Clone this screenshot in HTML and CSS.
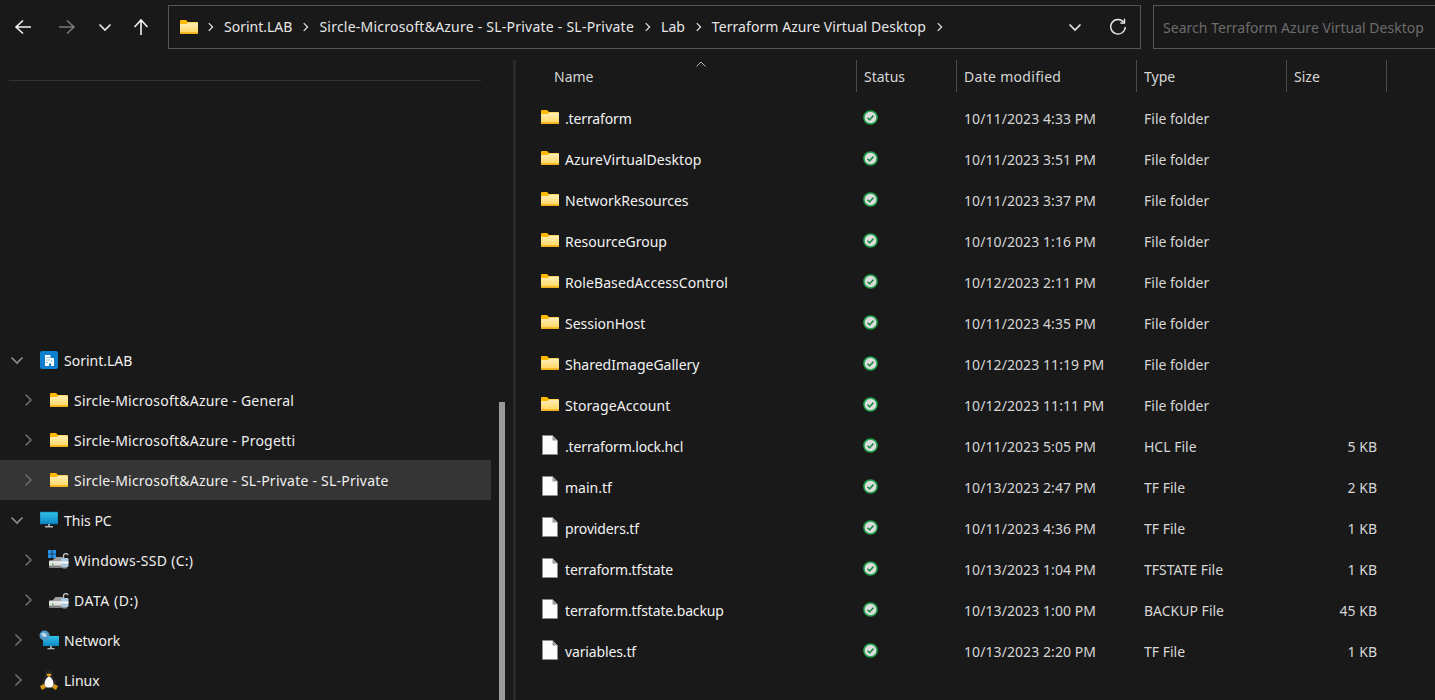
FILE: index.html
```html
<!DOCTYPE html>
<html lang="en">
<head>
<meta charset="utf-8">
<title>Terraform Azure Virtual Desktop</title>
<link rel="stylesheet" href="styles.css">
</head>
<body>
<svg class="defs" width="0" height="0" aria-hidden="true">
  <defs>
    <linearGradient id="fg" x1="0" y1="0" x2="0" y2="1"><stop offset="0" stop-color="#ffefb8"/><stop offset="1" stop-color="#ffd966"/></linearGradient>
    <linearGradient id="sc" x1="0" y1="0" x2="0" y2="1"><stop offset="0" stop-color="#2fc3e6"/><stop offset="1" stop-color="#0f86c4"/></linearGradient>
    <symbol id="folder" viewBox="0 0 18 14">
      <path d="M0 1a1 1 0 0 1 1-1h5l2 2h9a1 1 0 0 1 1 1v10a1 1 0 0 1-1 1H1a1 1 0 0 1-1-1z" fill="#ffb900"/>
      <path d="M0 4h6.500L8.500 2.500H17a1 1 0 0 1 1 1V12.500H0z" fill="url(#fg)"/>
      <path d="M0 12.500h18v.5a1 1 0 0 1-1 1H1a1 1 0 0 1-1-1z" fill="#f2b01e"/>
    </symbol>
    <symbol id="file" viewBox="0 0 16 20">
      <path d="M.5.500H10.500L15.500 5.500V19.500H.5z" fill="#fcfcfc" stroke="#8a8a8a"/>
      <path d="M10.500.500V5.500H15.500z" fill="#9a9a9a"/>
    </symbol>
    <symbol id="ok" viewBox="0 0 16 16">
      <circle cx="8" cy="8" r="7" fill="#dcdcdc" stroke="#1fa34a" stroke-width="1.600"/>
      <path d="M4.800 8.300l2.200 2.100 4.200-4.400" fill="none" stroke="#1f8a44" stroke-width="1.700"/>
    </symbol>
    <symbol id="chev-r" viewBox="0 0 10 14"><path d="M2.500 1.500L8 7l-5.500 5.500" fill="none" stroke="currentColor" stroke-width="1.700"/></symbol>
    <symbol id="chev-d" viewBox="0 0 14 10"><path d="M1.500 2.500L7 8l5.500-5.500" fill="none" stroke="currentColor" stroke-width="1.700"/></symbol>
    <symbol id="drive" viewBox="0 0 20 16">
      <path d="M3.500 7.500L6.500 4h7v3.500z" fill="#a0a0a0"/>
      <rect x="0" y="7.500" width="15" height="7" rx="1" fill="#e2e2e2"/>
      <rect x="0" y="12.500" width="15" height="2" fill="#808080"/>
      <rect x="3" y="10.500" width="1.500" height="1.500" fill="#2fb344"/>
      <path d="M14.500 5V2.800a2.300 2.300 0 0 1 4.500-.6" fill="none" stroke="#c0c0c0" stroke-width="1.400"/>
      <rect x="12" y="5" width="7.500" height="9" rx="1" fill="#a9c9e0"/>
      <rect x="12" y="8.500" width="7.500" height="2" fill="#f0f6fa"/>
      <rect x="13.500" y="14" width="4.500" height="1.500" fill="#909090"/>
    </symbol>
    <symbol id="winlogo" viewBox="0 0 7 7">
      <path d="M0 0h3.200v3.200H0zM3.800 0H7v3.200H3.800zM0 3.800h3.200V7H0zM3.800 3.800H7V7H3.800z" fill="#2a93e6"/>
    </symbol>
  </defs>
</svg>

<header class="toolbar">
  <div class="nav-buttons">
    <svg class="tb-ico back" viewBox="0 0 18 18"><path d="M17 9H2M9 2.500L2 9l7 6.500" fill="none" stroke="currentColor" stroke-width="1.600"/></svg>
    <svg class="tb-ico forward" viewBox="0 0 18 18"><path d="M1 9H16M9 2.500L16 9l-7 6.500" fill="none" stroke="currentColor" stroke-width="1.600"/></svg>
    <svg class="tb-chev" viewBox="0 0 14 10"><use href="#chev-d"/></svg>
    <svg class="tb-ico up" viewBox="0 0 18 18"><path d="M9 17V2M2.500 9L9 2l6.500 7" fill="none" stroke="currentColor" stroke-width="1.600"/></svg>
  </div>
  <div class="address">
    <svg class="addr-folder"><use href="#folder"/></svg>
    <svg class="crumb-sep"><use href="#chev-r"/></svg><span>Sorint.LAB</span>
    <svg class="crumb-sep"><use href="#chev-r"/></svg><span class="sircle">Sircle-Microsoft&amp;Azure - SL-Private - SL-Private</span>
    <svg class="crumb-sep"><use href="#chev-r"/></svg><span>Lab</span>
    <svg class="crumb-sep"><use href="#chev-r"/></svg><span class="crumb-long">Terraform Azure Virtual Desktop</span>
    <svg class="crumb-sep"><use href="#chev-r"/></svg>
    <div class="addr-tools">
      <svg class="addr-chev" viewBox="0 0 14 10"><use href="#chev-d"/></svg>
      <svg class="refresh" viewBox="0 0 18 18"><path d="M14.800 4.300A7.300 7.300 0 1 0 16.300 9" fill="none" stroke="currentColor" stroke-width="1.400"/><path d="M15.500 .8v4.200h-4.200" fill="none" stroke="currentColor" stroke-width="1.400"/></svg>
    </div>
  </div>
  <div class="search">Search Terraform Azure Virtual Desktop</div>
</header>

<main class="body">
  <nav class="sidebar">
    <div class="side-rule"></div>
    <div class="tree">
      <div class="tree-row lvl1">
        <svg class="exp-d" viewBox="0 0 14 10"><use href="#chev-d"/></svg>
        <svg class="t-ico" viewBox="0 0 18 18"><rect width="18" height="18" rx="2" fill="#0f7fd0"/><path d="M5 15V4h5.500v3H14v8h-3v-2.500H9V15z" fill="#fff"/><path d="M6.500 6h1v1h-1zM8.500 6h1v1h-1zM6.500 8.500h1v1h-1zM8.500 8.500h1v1h-1zM11 9.500h1v1h-1zM6.500 11h1v1h-1z" fill="#0f7fd0"/></svg>
        <span class="label">Sorint.LAB</span>
      </div>
      <div class="tree-row lvl2">
        <svg class="exp-r" viewBox="0 0 10 14"><use href="#chev-r"/></svg>
        <svg class="t-folder"><use href="#folder"/></svg>
        <span class="label sircle">Sircle-Microsoft&amp;Azure - General</span>
      </div>
      <div class="tree-row lvl2">
        <svg class="exp-r" viewBox="0 0 10 14"><use href="#chev-r"/></svg>
        <svg class="t-folder"><use href="#folder"/></svg>
        <span class="label sircle">Sircle-Microsoft&amp;Azure - Progetti</span>
      </div>
      <div class="tree-row lvl2 selected">
        <svg class="exp-r" viewBox="0 0 10 14"><use href="#chev-r"/></svg>
        <svg class="t-folder"><use href="#folder"/></svg>
        <span class="label sircle">Sircle-Microsoft&amp;Azure - SL-Private - SL-Private</span>
      </div>
      <div class="tree-row lvl1">
        <svg class="exp-d" viewBox="0 0 14 10"><use href="#chev-d"/></svg>
        <svg class="t-ico" viewBox="0 0 18 18"><rect y="1" width="18" height="12" rx=".5" fill="url(#sc)"/><rect y="1" width="18" height="12" fill="none" stroke="#0a6d9e" stroke-width=".6"/><rect x="8" y="13" width="2" height="2" fill="#8aa"/><rect x="5" y="15" width="8" height="1.500" fill="#b0b8bc"/></svg>
        <span class="label">This PC</span>
      </div>
      <div class="tree-row lvl2">
        <svg class="exp-r" viewBox="0 0 10 14"><use href="#chev-r"/></svg>
        <span class="drive-wrap">
          <svg class="t-drive"><use href="#drive"/></svg>
          <svg class="t-win"><use href="#winlogo"/></svg>
        </span>
        <span class="label drive-label">Windows-SSD (C:)</span>
      </div>
      <div class="tree-row lvl2">
        <svg class="exp-r" viewBox="0 0 10 14"><use href="#chev-r"/></svg>
        <span class="drive-wrap"><svg class="t-drive"><use href="#drive"/></svg></span>
        <span class="label data-label">DATA (D:)</span>
      </div>
      <div class="tree-row lvl1">
        <svg class="exp-r" viewBox="0 0 10 14"><use href="#chev-r"/></svg>
        <svg class="t-ico wide" viewBox="0 0 20 20"><rect x="4" y="6" width="16" height="10" fill="url(#sc)"/><rect x="11" y="16" width="2" height="2" fill="#8aa"/><rect x="8.500" y="18" width="7" height="1.300" fill="#b0b8bc"/><circle cx="5.500" cy="5.500" r="5" fill="#4f97c4"/><path d="M2 4c2-2 4-1 5 0s1 3-1 3-3-1-4-3z" fill="#b8d8ec"/></svg>
        <span class="label">Network</span>
      </div>
      <div class="tree-row lvl1">
        <svg class="exp-r" viewBox="0 0 10 14"><use href="#chev-r"/></svg>
        <svg class="t-ico wide" viewBox="0 0 20 20"><path d="M10 0c2.800 0 3.700 2.300 3.700 4.500 0 2.200 2.800 4.500 3.300 8.500.2 2-1 3.500-7 3.500S2.800 15 3 13c.5-4 3.300-6.300 3.300-8.500C6.300 2.300 7.200 0 10 0z" fill="#262626"/><path d="M10 6.500c1.700 0 4.500 4 4.500 7.200S12.800 17.500 10 17.500s-4.500-.6-4.500-3.800S8.300 6.500 10 6.500z" fill="#fff"/><path d="M8.300 3.800h3.400l.9 1.300L10 6.900 7.400 5.100z" fill="#e0a020"/><path d="M1 16l4-2 1.800 3.800L3 20zM19 16l-4-2-1.800 3.800L17 20z" fill="#d99a17"/></svg>
        <span class="label">Linux</span>
      </div>
    </div>
    <div class="nav-scroll"></div>
  </nav>
  <div class="divider"></div>
  <section class="list">
    <div class="row head">
      <div class="cell name-h">Name<svg class="sort" viewBox="0 0 10 6"><path d="M.5 5.500L5 1l4.500 4.500" fill="none" stroke="currentColor"/></svg></div>
      <div class="cell">Status</div>
      <div class="cell date-h">Date modified</div>
      <div class="cell">Type</div>
      <div class="cell">Size</div>
    </div>
    <div class="rows">
      <div class="row item"><div class="name tight"><svg class="i-folder"><use href="#folder"/></svg>.terraform</div><div class="status"><svg class="i-ok"><use href="#ok"/></svg></div><div class="cell-d date">10/11/2023 4:33 PM</div><div class="cell-d">File folder</div><div class="size"></div></div>
      <div class="row item"><div class="name loose"><svg class="i-folder"><use href="#folder"/></svg>AzureVirtualDesktop</div><div class="status"><svg class="i-ok"><use href="#ok"/></svg></div><div class="cell-d date">10/11/2023 3:51 PM</div><div class="cell-d">File folder</div><div class="size"></div></div>
      <div class="row item"><div class="name"><svg class="i-folder"><use href="#folder"/></svg>NetworkResources</div><div class="status"><svg class="i-ok"><use href="#ok"/></svg></div><div class="cell-d date">10/11/2023 3:37 PM</div><div class="cell-d">File folder</div><div class="size"></div></div>
      <div class="row item"><div class="name"><svg class="i-folder"><use href="#folder"/></svg>ResourceGroup</div><div class="status"><svg class="i-ok"><use href="#ok"/></svg></div><div class="cell-d date">10/10/2023 1:16 PM</div><div class="cell-d">File folder</div><div class="size"></div></div>
      <div class="row item"><div class="name loose"><svg class="i-folder"><use href="#folder"/></svg>RoleBasedAccessControl</div><div class="status"><svg class="i-ok"><use href="#ok"/></svg></div><div class="cell-d date">10/12/2023 2:11 PM</div><div class="cell-d">File folder</div><div class="size"></div></div>
      <div class="row item"><div class="name"><svg class="i-folder"><use href="#folder"/></svg>SessionHost</div><div class="status"><svg class="i-ok"><use href="#ok"/></svg></div><div class="cell-d date">10/11/2023 4:35 PM</div><div class="cell-d">File folder</div><div class="size"></div></div>
      <div class="row item"><div class="name"><svg class="i-folder"><use href="#folder"/></svg>SharedImageGallery</div><div class="status"><svg class="i-ok"><use href="#ok"/></svg></div><div class="cell-d date">10/12/2023 11:19 PM</div><div class="cell-d">File folder</div><div class="size"></div></div>
      <div class="row item"><div class="name loose"><svg class="i-folder"><use href="#folder"/></svg>StorageAccount</div><div class="status"><svg class="i-ok"><use href="#ok"/></svg></div><div class="cell-d date">10/12/2023 11:11 PM</div><div class="cell-d">File folder</div><div class="size"></div></div>
      <div class="row item"><div class="name tight"><svg class="i-file"><use href="#file"/></svg>.terraform.lock.hcl</div><div class="status"><svg class="i-ok"><use href="#ok"/></svg></div><div class="cell-d date">10/11/2023 5:05 PM</div><div class="cell-d">HCL File</div><div class="size">5 KB</div></div>
      <div class="row item"><div class="name"><svg class="i-file"><use href="#file"/></svg>main.tf</div><div class="status"><svg class="i-ok"><use href="#ok"/></svg></div><div class="cell-d date">10/13/2023 2:47 PM</div><div class="cell-d">TF File</div><div class="size">2 KB</div></div>
      <div class="row item"><div class="name tight"><svg class="i-file"><use href="#file"/></svg>providers.tf</div><div class="status"><svg class="i-ok"><use href="#ok"/></svg></div><div class="cell-d date">10/11/2023 4:36 PM</div><div class="cell-d">TF File</div><div class="size">1 KB</div></div>
      <div class="row item"><div class="name tight"><svg class="i-file"><use href="#file"/></svg>terraform.tfstate</div><div class="status"><svg class="i-ok"><use href="#ok"/></svg></div><div class="cell-d date">10/13/2023 1:04 PM</div><div class="cell-d">TFSTATE File</div><div class="size">1 KB</div></div>
      <div class="row item"><div class="name tight"><svg class="i-file"><use href="#file"/></svg>terraform.tfstate.backup</div><div class="status"><svg class="i-ok"><use href="#ok"/></svg></div><div class="cell-d date">10/13/2023 1:00 PM</div><div class="cell-d">BACKUP File</div><div class="size">45 KB</div></div>
      <div class="row item"><div class="name tight"><svg class="i-file"><use href="#file"/></svg>variables.tf</div><div class="status"><svg class="i-ok"><use href="#ok"/></svg></div><div class="cell-d date">10/13/2023 2:20 PM</div><div class="cell-d">TF File</div><div class="size">1 KB</div></div>
    </div>
  </section>
</main>
</body>
</html>
```
FILE: styles.css
```css
* { box-sizing: border-box; }
html, body { margin: 0; height: 100%; overflow: hidden; }
body {
  background: #191919;
  color: #f2f2f2;
  font-family: "Noto Sans", "Open Sans", "Liberation Sans", sans-serif;
  font-size: 14px;
  line-height: 20px;
  display: flex;
  flex-direction: column;
  width: 1435px;
  height: 700px;
}
.defs { position: absolute; width: 0; height: 0; overflow: hidden; }
svg { display: block; flex: none; }
.sircle { letter-spacing: .23px; }
.drive-label { letter-spacing: .3px; }
.data-label { letter-spacing: .55px; }
.tight { letter-spacing: -.14px; }
.loose { letter-spacing: .08px; }

.toolbar { height: 60px; flex: none; display: flex; align-items: flex-start; padding-top: 5px; }
.nav-buttons { width: 168px; height: 44px; display: flex; align-items: center; flex: none; }
.tb-ico { width: 18px; height: 18px; color: #f2f2f2; }
.back { margin-left: 14px; }
.forward { margin-left: 26px; color: #7b7b7b; }
.tb-chev { width: 14px; height: 10px; margin-left: 22px; color: #e6e6e6; }
.tb-ico.up { margin-left: 20px; }

.address {
  width: 973px; height: 44px; flex: none;
  border: 1px solid #555;
  display: flex; align-items: center;
  padding-left: 11px;
  color: #e6e6e6;
  white-space: nowrap;
}
.addr-folder { width: 18px; height: 14px; }
.crumb-sep { width: 7px; height: 10px; margin: 0 10px; color: #e6e6e6; }
.addr-folder + .crumb-sep { margin-left: 9px; }
.crumb-long { letter-spacing: .07px; }
.addr-tools { margin-left: auto; display: flex; align-items: center; }
.addr-chev { width: 14px; height: 10px; color: #e6e6e6; margin-right: 27px; }
.refresh { width: 18px; height: 18px; color: #e6e6e6; margin-right: 13px; }

.search {
  margin-left: 12px; width: 290px; height: 44px; flex: none;
  border: 1px solid #555; border-right: 0;
  display: flex; align-items: center;
  padding: 1px 0 0 9px;
  color: #6c6c6c;
  letter-spacing: .03px;
  white-space: nowrap;
  overflow: hidden;
}

.body { flex: 1; display: flex; min-height: 0; }
.sidebar { width: 513px; flex: none; display: flex; flex-direction: column; position: relative; }
.side-rule { height: 1px; background: #333; margin: 20px 32px 0 9px; flex: none; }
.tree { margin-top: auto; width: 491px; }
.tree-row { height: 40px; display: flex; align-items: center; color: #f0f0f0; white-space: nowrap; }
.tree-row.selected { background: #353535; }
.label { padding-top: 1px; }
.exp-d { width: 14px; height: 10px; color: #8c8c8c; margin-left: 10px; }
.exp-r { width: 10px; height: 14px; color: #6a6a6a; }
.lvl1 .exp-r { margin-left: 13px; }
.lvl2 .exp-r { margin-left: 23px; }
.t-ico { width: 18px; height: 18px; margin-left: 16px; margin-right: 6px; }
.lvl1 .exp-r + .t-ico { margin-left: 16px; }
.t-ico.wide { width: 20px; height: 20px; margin-left: 16px; margin-right: 5px; }
.t-folder { width: 18px; height: 14px; margin-left: 17px; margin-right: 6px; }
.drive-wrap { width: 20px; height: 20px; margin-left: 15px; margin-right: 6px; position: relative; flex: none; display: block; }
.t-drive { width: 20px; height: 16px; position: absolute; left: 1px; top: 3px; }
.t-win { width: 8px; height: 8px; position: absolute; left: 0; top: 0; }
.nav-scroll { position: absolute; left: 499px; top: 342px; bottom: 0; width: 6px; background: #999; }
.divider { width: 3px; flex: none; background: #2a2a2a; }

.list { flex: 1; min-width: 0; display: flex; flex-direction: column; }
.row { display: grid; grid-template-columns: 341px 100px 180px 150px 100px; }
.head { height: 32px; color: #d6d6d6; }
.cell { border-right: 1px solid #4a4a4a; padding: 1px 0 0 7px; display: flex; align-items: center; position: relative; }
.name-h { padding-left: 38px; }
.date-h { letter-spacing: .3px; }
.sort { position: absolute; left: 180px; top: 1px; width: 10px; height: 6px; color: #b5b5b5; }
.rows { padding-top: 6px; display: flex; flex-direction: column; }
.item { height: 41px; align-items: center; }
.name { display: flex; align-items: center; padding-left: 25px; }
.i-folder { width: 18px; height: 14px; margin-right: 6px; margin-bottom: 3px; }
.i-file { width: 16px; height: 20px; margin-left: 1px; margin-right: 7px; margin-bottom: 3px; }
.status { padding-left: 6px; }
.i-ok { width: 15px; height: 15px; margin-bottom: 2px; }
.cell-d { padding-left: 7px; color: #d6d6d6; white-space: nowrap; }
.date { letter-spacing: .08px; }
.size { text-align: right; padding-right: 10px; color: #d6d6d6; }
```
